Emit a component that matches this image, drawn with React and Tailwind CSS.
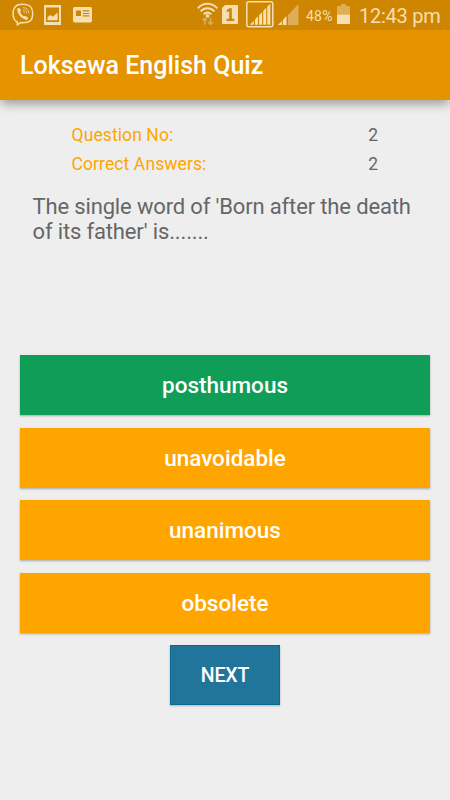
import React from 'react';
import clsx from 'clsx';

const stats = [
  { label: 'Question No:', value: 2 },
  { label: 'Correct Answers:', value: 2 },
];

const options = [
  { text: 'posthumous', correct: true },
  { text: 'unavoidable', correct: false },
  { text: 'unanimous', correct: false },
  { text: 'obsolete', correct: false },
];

function ViberIcon() {
  return (
    <svg width="22" height="24" viewBox="0 0 22 24" fill="none" stroke="#f5dfb3" strokeLinecap="round" strokeLinejoin="round">
      <path strokeWidth="1.5" d="M11 1.2C4 1.2 1.1 4 1.1 10.600c0 4.600 1.200 7.200 4.200 8.400v2.900l3.200-2.300c8.800.8 12.200-1.600 12.200-9C20.700 4 18 1.200 11 1.200z" />
      <path strokeWidth="2.400" d="M6.500 6.400c-.6 3.400 3.400 8.200 7.600 9.200" />
      <path strokeWidth="2.800" d="M6.800 6.500l.8 1.300M13.100 14.500l1.500.8" />
      <path strokeWidth="1" opacity=".75" d="M11.300 4.600c3.600.2 5.500 2.300 5.600 5.600M11.500 6.800c2 .2 3 1.300 3.100 3.200M11.700 8.900c.5.100.8.400.9.900" />
    </svg>
  );
}

function PictureIcon() {
  return (
    <svg width="18" height="20" viewBox="0 0 18 20" fill="#f5dfb3">
      <path fillRule="evenodd" d="M0 0h17v20H0zM2 2.600v14.400H15V2.600z" />
      <path d="M3.500 15.300v-3l2.800-2.200 2.500 1.700 4.800-4.300v7.800z" />
    </svg>
  );
}

function CardIcon() {
  return (
    <svg width="20" height="16" viewBox="0 0 20 16">
      <rect width="19" height="15.600" rx="1.800" fill="#f5dfb3" />
      <path fill="#ce8500" d="M3 3.500h5v5.500H3zM9.800 3.300h6.400v1.300H9.800zM9.800 5.900h6.400v1.200H9.800zM9.800 8.300h6.400v1.100H9.800z" />
    </svg>
  );
}

function WifiIcon() {
  return (
    <svg width="21" height="23" viewBox="0 0 21 23" fill="none" stroke="#f5dfb3">
      <path strokeWidth="1.900" d="M.7 6.300C6.200.3 14.800.3 20.300 6.300M3.600 9.400c4-4.200 9.800-4.200 13.800 0M6.600 12.300c2.400-2.400 5.400-2.400 7.800 0" />
      <circle cx="10.500" cy="13.900" r="1.800" fill="#f5dfb3" stroke="none" />
      <path stroke="#dfad56" strokeWidth="1.500" d="M7.800 16v6.800M5.300 18.400l2.500-2.400 2 2.400M13.500 15.500v6.800M11.200 20l2.300 2.400 2.500-2.400" />
    </svg>
  );
}

function SimIcon() {
  return (
    <svg width="16" height="19" viewBox="0 0 16 19">
      <path fill="#f5dfb3" d="M3 0h12q1 0 1 1v17q0 1-1 1H1q-1 0-1-1V3z" />
      <path fill="#ce8500" d="M7.300 3.200h2.500v10.500h2.500V16H4.600v-2.300h2.600V6.300l-2.400.9V4.900z" />
    </svg>
  );
}

function FramedSignalIcon() {
  return (
    <svg width="28" height="27" viewBox="0 0 28 27">
      <rect x=".8" y=".8" width="26" height="25" rx="2" fill="none" stroke="#f5dfb3" strokeWidth="1.500" />
      <path fill="#f5dfb3" d="M4 23.800l3.800-4v4zM9 18.500l3-3.200v8.500H9zM13.100 14.200l3-3.200v12.800h-3zM17.200 9.900l3-3.200v17.100h-3zM21.300 5.500l3-2.800v21.100h-3z" />
    </svg>
  );
}

function SignalIcon() {
  return (
    <svg width="21" height="21" viewBox="0 0 21 21">
      <path fill="#dfad56" d="M10 11L20.500 0v21H10z" />
      <path fill="#f5dfb3" d="M0 21l3.800-4v4zM4.900 15.900l3.600-3.800V21H4.900z" />
    </svg>
  );
}

function BatteryIcon() {
  return (
    <svg width="13" height="20" viewBox="0 0 13 20">
      <path fill="#dfad56" d="M4 0h5v2h4v9H0V2h4z" />
      <path fill="#f5dfb3" d="M0 10.700h13V20H0z" />
    </svg>
  );
}

function StatusBar() {
  return (
    <div className="relative z-10 flex h-[30px] items-start bg-[#ce8500] text-[#f5dfb3]">
      <div className="ml-3 mt-[3px]"><ViberIcon /></div>
      <div className="ml-[10px] mt-[5px]"><PictureIcon /></div>
      <div className="ml-[11px] mt-[7px]"><CardIcon /></div>
      <div className="ml-auto mt-[2px]"><WifiIcon /></div>
      <div className="ml-[4px] mt-[5px]"><SimIcon /></div>
      <div className="ml-[8px] mt-[1px]"><FramedSignalIcon /></div>
      <div className="ml-[4px] mt-[4px]"><SignalIcon /></div>
      <span className="ml-[7px] mt-[6px] w-[28px] whitespace-nowrap text-[14px] leading-5 tracking-[0.2px]">48%</span>
      <div className="ml-[3px] mt-[4px]"><BatteryIcon /></div>
      <span className="ml-[9px] mr-[10px] mt-1 w-[81px] whitespace-nowrap text-[20px] leading-6 tracking-[-0.25px]">12:43 pm</span>
    </div>
  );
}

export default function App() {
  return (
    <div className="flex h-[800px] w-[450px] flex-col overflow-hidden bg-[#eeeeee] font-['Roboto',sans-serif]">
      <StatusBar />

      <header className="flex h-[70px] shrink-0 items-center bg-[#e59400] px-5 pt-[2px] shadow-[0_5px_10px_-1px_rgba(0,0,0,0.35)]">
        <h1 className="text-[25px] font-medium text-white">Loksewa English Quiz</h1>
      </header>

      <main className="flex flex-1 flex-col px-5 pt-[21px]">
        <div className="pl-[51.5px] pr-[52px]">
          {stats.map((stat) => (
            <div key={stat.label} className="flex h-[29px] items-center justify-between text-[17.5px]">
              <span className="tracking-[0.1px] text-[#ffa500]">{stat.label}</span>
              <span className="text-[#666666]">{stat.value}</span>
            </div>
          ))}
        </div>

        <p className="mt-[15px] h-[161px] whitespace-nowrap pl-[12.5px] text-[22px] leading-[25px] tracking-[-0.15px] text-[#666666]">
          The single word of 'Born after the death
          <br />
          of its father' is.......
        </p>

        <div className="flex flex-col gap-[12.5px]">
          {options.map((option) => (
            <button
              key={option.text}
              className={clsx(
                'h-[60px] w-full pt-[2px] text-[22.5px] font-medium text-white shadow-[0_1px_2px_rgba(0,0,0,0.3)]',
                option.correct ? 'bg-[#109d58]' : 'bg-[#ffa500]'
              )}
            >
              {option.text}
            </button>
          ))}
        </div>

        <button className="mt-[12.5px] h-[60px] w-[110px] self-center border border-[#0c6993] bg-[#21759b] pt-[2px] text-[19.5px] font-medium tracking-[-0.1px] text-white shadow-[0_1px_2px_rgba(0,0,0,0.25)]">
          NEXT
        </button>
      </main>
    </div>
  );
}
